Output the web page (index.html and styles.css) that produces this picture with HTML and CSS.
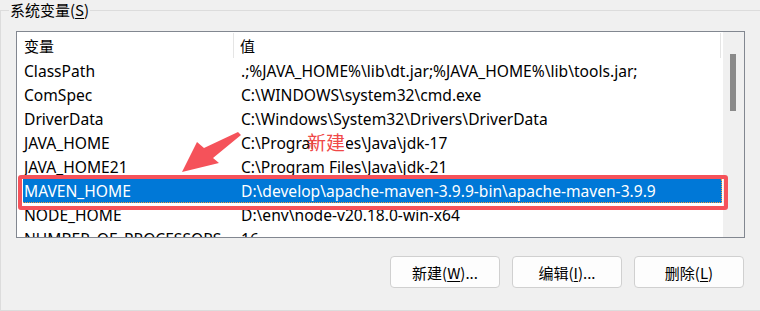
FILE: index.html
```html
<!DOCTYPE html>
<html lang="zh-CN">
<head>
<meta charset="utf-8">
<link rel="stylesheet" href="styles.css">
</head>
<body>
<div class="group">
  <span class="legend">系统变量(<u>S</u>)</span>
  <div class="listbox">
    <div class="list">
      <div class="header">
        <div class="hcell name">变量</div>
        <div class="hcell value">值</div>
      </div>
      <div class="row"><span class="c1">ClassPath</span><span class="c2">.;%JAVA_HOME%\lib\dt.jar;%JAVA_HOME%\lib\tools.jar;</span></div>
      <div class="row"><span class="c1">ComSpec</span><span class="c2">C:\WINDOWS\system32\cmd.exe</span></div>
      <div class="row"><span class="c1">DriverData</span><span class="c2">C:\Windows\System32\Drivers\DriverData</span></div>
      <div class="row"><span class="c1">JAVA_HOME</span><span class="c2">C:\Program Files\Java\jdk-17</span></div>
      <div class="row"><span class="c1">JAVA_HOME21</span><span class="c2">C:\Program Files\Java\jdk-21</span></div>
      <div class="row selected"><span class="c1">MAVEN_HOME</span><span class="c2">D:\develop\apache-maven-3.9.9-bin\apache-maven-3.9.9</span></div>
      <div class="row"><span class="c1">NODE_HOME</span><span class="c2">D:\env\node-v20.18.0-win-x64</span></div>
      <div class="row"><span class="c1">NUMBER_OF_PROCESSORS</span><span class="c2">16</span></div>
    </div>
    <div class="scrollbar"><div class="thumb"></div></div>
    <div class="highlight"></div>
    <svg class="arrow" width="80" height="60" viewBox="0 0 80 60">
      <polygon points="60,0 63,3 35,26 41,31 4,40 19,10 26,16" fill="#f5525a"/>
    </svg>
    <span class="note">新建</span>
  </div>
  <div class="buttons">
    <button class="btn">新建(<u>W</u>)...</button>
    <button class="btn">编辑(<u>I</u>)...</button>
    <button class="btn">删除(<u>L</u>)</button>
  </div>
</div>
</body>
</html>
```
FILE: styles.css
```css
* { box-sizing: border-box; }
html, body {
  margin: 0;
  padding: 0;
  background: #f0f0f0;
  font-family: "Noto Sans", "Noto Sans CJK SC", sans-serif;
  font-size: 15px;
  color: #000;
  width: 760px;
  height: 311px;
  overflow: hidden;
}
.group {
  position: relative;
  margin-top: 10px;
  width: 760px;
  height: 301px;
  border: 1px solid #dcdcdc;
  border-right: none;
  padding: 20px 0 0 15px;
}
.legend {
  position: absolute;
  top: -11px;
  left: 8px;
  padding: 0 1px;
  line-height: 20px;
  background: #f0f0f0;
  font-family: "Noto Sans CJK SC", sans-serif;
}
.legend u { text-underline-offset: 2px; }
.listbox {
  position: relative;
  width: 729px;
  height: 207px;
  border: 1px solid #828790;
  background: #fff;
  display: flex;
  overflow: hidden;
}
.list {
  width: 706px;
  padding-left: 6px;
}
.header {
  display: flex;
  height: 27px;
  margin-left: -6px;
  padding-top: 1px;
}
.hcell {
  height: 25px;
  line-height: 26px;
  font-family: "Noto Sans CJK SC", sans-serif;
  border-right: 1px solid #e5e5e5;
}
.hcell.name { width: 217px; padding-left: 7px; }
.hcell.value { width: 487px; padding-left: 6px; }
.row {
  display: flex;
  height: 24px;
  line-height: 24px;
  width: 699px;
  white-space: nowrap;
  font-size: 15.6px;
}
.c1 { width: 218px; padding-left: 1px; }
.c2 { flex: 1; }
.row.selected {
  background: #0078d7;
  color: #fff;
  border-bottom: 1px dotted #f09a3c;
  border-right: 1px dotted #f09a3c;
}
.scrollbar {
  width: 21px;
  height: 205px;
  background: #f0f0f0;
  padding: 22px 0 0 7px;
}
.thumb {
  width: 6px;
  height: 57px;
  background: #8a8a8a;
}
.highlight {
  position: absolute;
  left: 1px;
  top: 143px;
  width: 710px;
  height: 35px;
  border: 4px solid #f5525a;
  border-radius: 3px;
}
.arrow {
  position: absolute;
  left: 161px;
  top: 100px;
}
.note {
  position: absolute;
  left: 289px;
  top: 98px;
  padding: 0 1px;
  background: linear-gradient(to right, transparent 7px, #fff 7px);
  color: #f04848;
  font-family: "Noto Sans CJK SC", sans-serif;
  font-size: 19px;
  line-height: 24px;
}
.buttons {
  display: flex;
  gap: 12px;
  justify-content: flex-end;
  width: 729px;
  margin-top: 18px;
  padding-right: 1px;
}
.btn {
  width: 110px;
  height: 32px;
  background: #fdfdfd;
  border: 1px solid #d0d0d0;
  border-radius: 4px;
  font-family: "Noto Sans CJK SC", sans-serif;
  font-size: 15px;
  color: #000;
  padding: 0;
}
.btn u { text-underline-offset: 2px; }
```
